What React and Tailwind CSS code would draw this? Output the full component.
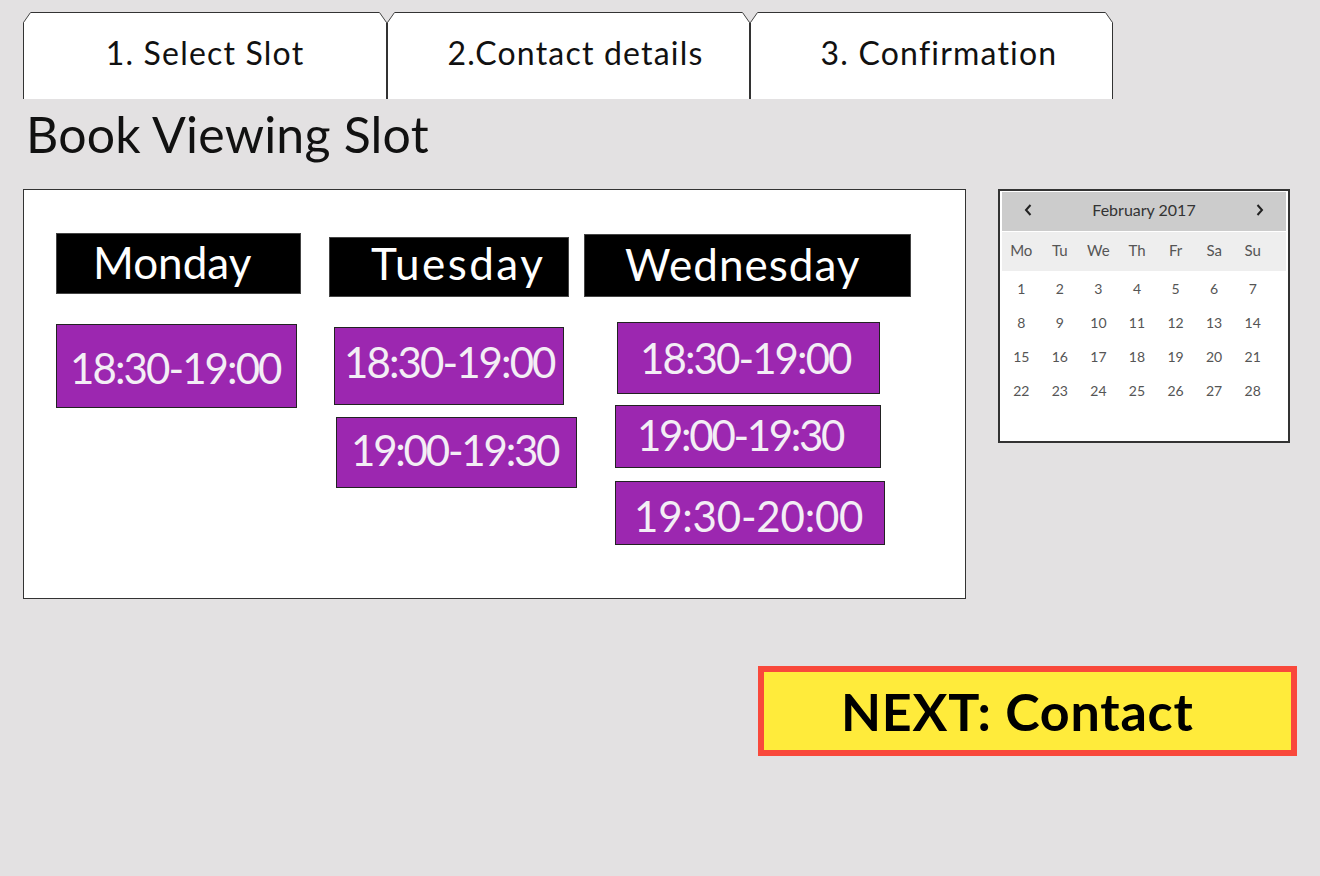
const font = "font-['Lato','Noto_Sans',sans-serif]";

const weekdays = ["Mo", "Tu", "We", "Th", "Fr", "Sa", "Su"];
const dates = Array.from({ length: 28 }, (_, i) => i + 1);

function Corner({ className, points, line }) {
  return (
    <svg className={`absolute -top-px ${className}`} width="8" height="11" viewBox="0 0 8 11">
      <polygon points={points} fill="#e3e1e2" />
      <path d={line} stroke="#444" strokeWidth="1" fill="none" />
    </svg>
  );
}

function Tab({ label, className }) {
  return (
    <div className={`relative flex h-[87px] items-start justify-center border border-b-0 border-[#333] bg-white pt-[18px] text-[32px] leading-[44px] tracking-[1.2px] text-[#111] ${className}`}>
      <Corner className="-left-px" points="0,0 8,0 0,11" line="M0.5 10.5 7.5 0.5" />
      <Corner className="-right-px" points="0,0 8,0 8,11" line="M0.5 0.5 7.5 10.5" />
      {label}
    </div>
  );
}

function Day({ label, className }) {
  return (
    <div className={`flex items-center whitespace-nowrap border border-[#444] bg-black text-[44px] leading-none text-white ${className}`}>
      {label}
    </div>
  );
}

function Slot({ label, className }) {
  return (
    <div className={`flex items-center whitespace-nowrap border border-[#222] bg-[#9c27b0] text-[42px] leading-none text-[#f3eef5] ${className}`}>
      {label}
    </div>
  );
}

function Calendar() {
  return (
    <div className="ml-[32px] h-[254px] w-[292px] border-2 border-[#333] bg-white px-[2px] pt-px text-[#555]">
      <div className="flex h-[39px] items-center justify-between bg-[#cccccc] px-[21px] pb-[4px] text-[#333]">
        <svg width="10" height="14" viewBox="0 0 10 14" fill="none" stroke="#222" strokeWidth="2"><path d="M7.5 2 3 7l4.5 5" /></svg>
        <span className="text-[16px]">February 2017</span>
        <svg width="10" height="14" viewBox="0 0 10 14" fill="none" stroke="#222" strokeWidth="2"><path d="M2.5 2 7 7l-4.5 5" /></svg>
      </div>
      <div className="mt-[1px] h-[39px] bg-[#eeeeee]">
        <div className="grid h-full w-[270px] grid-cols-7 items-center pb-[2px] text-center text-[15px]">
          {weekdays.map((d) => (
            <span key={d}>{d}</span>
          ))}
        </div>
      </div>
      <div className="mt-[1px] grid w-[270px] grid-cols-7 text-center text-[14px] leading-[34px]">
        {dates.map((d) => (
          <span key={d}>{d}</span>
        ))}
      </div>
    </div>
  );
}

export default function App() {
  return (
    <div className={`min-h-[876px] bg-[#e3e1e2] pl-[23px] pt-[12px] ${font}`}>
      {/* TABS */}
      <div className="flex w-[1090px]">
        <Tab label="1. Select Slot" className="w-[364px]" />
        <Tab label="2.Contact details" className="w-[363px] pl-[14px]" />
        <Tab label="3. Confirmation" className="w-[363px] pl-[15px]" />
      </div>

      <h1 className="ml-[3px] mt-[7px] h-[83px] text-[50px] leading-[56px] tracking-[0.2px] text-[#111]">Book Viewing Slot</h1>

      <div className="flex items-start">
        {/* SLOTS PANEL */}
        <div className="flex h-[410px] w-[943px] items-start border-[1.5px] border-[#333] bg-white">
          <div className="ml-[32px] mt-[43px] w-[245px]">
            <Day label="Monday" className="h-[61px] w-[245px] pb-[4px] pl-[36px]" />
            <Slot label="18:30-19:00" className="mt-[30px] h-[84px] w-[241px] pl-[13px] pt-[4px] tracking-[-1.9px]" />
          </div>

          <div className="ml-[28px] mt-[47px] w-[248px]">
            <Day label="Tuesday" className="h-[60px] w-[240px] pb-[8px] pl-[41px] tracking-[2.5px]" />
            <Slot label="18:30-19:00" className="ml-[5px] mt-[30px] h-[78px] w-[230px] pb-[8px] pl-[9px] tracking-[-1.9px]" />
            <Slot label="19:00-19:30" className="ml-[7px] mt-[12px] h-[71px] w-[241px] pb-[6px] pl-[14px] tracking-[-2.2px]" />
          </div>

          <div className="ml-[7px] mt-[44px] w-[327px]">
            <Day label="Wednesday" className="h-[63px] w-[327px] pb-[4px] pl-[40px] tracking-[1px]" />
            <Slot label="18:30-19:00" className="ml-[33px] mt-[25px] h-[72px] w-[263px] pl-[22px] tracking-[-1.9px]" />
            <Slot label="19:00-19:30" className="ml-[31px] mt-[11px] h-[63px] w-[266px] pb-[4px] pl-[21px] tracking-[-2.3px]" />
            <Slot label="19:30-20:00" className="ml-[31px] mt-[13px] h-[64px] w-[270px] pl-[18px] pt-[6px] tracking-[-0.2px]" />
          </div>
        </div>

        <Calendar />
      </div>

      {/* NEXT BUTTON */}
      <div className="ml-[735px] mt-[67px] flex h-[90px] w-[539px] items-center border-[6px] border-[#f9483b] bg-[#ffeb3b] pl-[77px] text-[52px] leading-none font-bold tracking-[0.8px] text-black">
        NEXT: Contact
      </div>
    </div>
  );
}
